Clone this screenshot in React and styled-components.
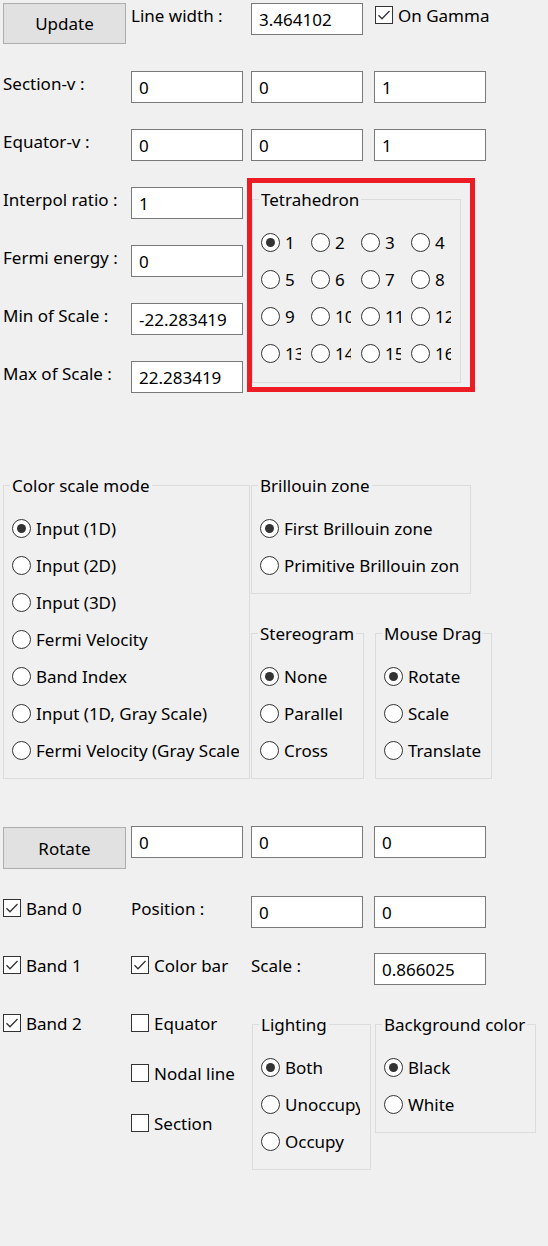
import React from "react";
import styled, { createGlobalStyle } from "styled-components";

const FONT = `"Noto Sans", "Open Sans", "DejaVu Sans", sans-serif`;
const SIZE = "17px";

const GlobalStyle = createGlobalStyle`
  html, body { margin: 0; padding: 0; background: #f0f0f0; }
  body { font-family: ${FONT}; font-size: ${SIZE}; color: #000; }
  *, *::before, *::after { box-sizing: border-box; }
`;

const Page = styled.div`
  position: relative;
  width: 548px;
  min-height: 1246px;
  padding: 3px 0 0 3px;
  display: flex;
  flex-direction: column;
  overflow: hidden;
  background: #f0f0f0;
`;

const FormGrid = styled.div`
  display: grid;
  grid-template-columns: 128px 120px 123px 1fr;
  grid-template-rows: ${(p) => p.$rows};
  align-items: start;
  margin-top: ${(p) => p.$mt || 0}px;
`;

const PushButton = styled.button`
  width: 123px;
  height: ${(p) => p.$h}px;
  margin-top: ${(p) => p.$mt || 0}px;
  background: #e1e1e1;
  border: 1px solid #adadad;
  border-radius: 0;
  font-family: ${FONT};
  font-size: ${SIZE};
  color: #000;
  padding: 0;
`;

const FieldLabel = styled.div`
  padding-top: 2px;
  line-height: 22px;
  white-space: nowrap;
`;

const TextBox = styled.input`
  display: block;
  width: 112px;
  height: 32px;
  border: 1px solid #7a7a7a;
  background: #fff;
  padding: 0 0 0 7px;
  margin: 0;
  font-family: ${FONT};
  font-size: ${SIZE};
  color: #000;
  outline: none;
`;

const CheckItem = styled.label`
  display: flex;
  align-items: center;
  gap: 5px;
  height: 24px;
  width: ${(p) => (p.$w ? `${p.$w}px` : "auto")};
  margin-left: ${(p) => p.$ml || 0}px;
  overflow: hidden;
  white-space: nowrap;
`;

const CheckBoxBox = styled.span`
  flex: 0 0 18px;
  width: 18px;
  height: 18px;
  border: 1px solid #333;
  background: #fff;
  display: flex;
  align-items: center;
  justify-content: center;
`;

const RadioItem = styled.label`
  display: flex;
  align-items: center;
  gap: 5px;
  height: 37px;
  width: ${(p) => (p.$w ? `${p.$w}px` : "auto")};
  overflow: hidden;
  white-space: nowrap;
`;

const RadioCircle = styled.span`
  flex: 0 0 19px;
  width: 19px;
  height: 19px;
  border-radius: 50%;
  border: 1px solid #333;
  background: #fff;
  display: flex;
  align-items: center;
  justify-content: center;
  &::after {
    content: "";
    display: ${(p) => (p.$on ? "block" : "none")};
    width: 9px;
    height: 9px;
    border-radius: 50%;
    background: #333;
  }
`;

const Frame = styled.div`
  position: relative;
  width: ${(p) => p.$w}px;
  margin-top: ${(p) => p.$mt || 0}px;
  margin-left: ${(p) => p.$ml || 0}px;
  border: 1px solid #dcdcdc;
  padding: 0 8px ${(p) => (p.$pb != null ? p.$pb : 9)}px 8px;
`;

const Legend = styled.div`
  width: fit-content;
  margin: -11px 0 0 -2px;
  padding: 0 2px;
  line-height: 22px;
  background: #f0f0f0;
  white-space: nowrap;
`;

const OptionList = styled.div`
  margin-top: 13px;
  display: flex;
  flex-direction: column;
`;

const OptionGrid = styled.div`
  margin-top: 13px;
  display: grid;
  grid-template-columns: repeat(4, 40px);
  grid-auto-rows: 37px;
  column-gap: 10px;
`;

const Highlight = styled.span`
  position: absolute;
  left: -6px;
  right: -15px;
  top: -22px;
  bottom: -10px;
  border: 5px solid #ed1c24;
  pointer-events: none;
`;

const Middle = styled.div`
  display: flex;
  align-items: flex-start;
  margin-top: 66px;
`;

const SideColumn = styled.div`
  display: flex;
  flex-direction: column;
  margin-left: 1px;
`;

const GroupRow = styled.div`
  display: flex;
  align-items: flex-start;
  margin-top: ${(p) => p.$mt || 0}px;
`;

const CheckStack = styled.div`
  display: flex;
  flex-direction: column;
  gap: 26px;
`;

const TetraCell = styled.div`
  grid-column: span 2;
  grid-row: span 4;
`;

const Tick = () => (
  <svg width="16" height="16" viewBox="0 0 16 16">
    <polyline
      points="2.5,8.2 6,11.8 13.5,4"
      fill="none"
      stroke="#333"
      strokeWidth="1.3"
    />
  </svg>
);

const Check = ({ label, on, w, ml }) => (
  <CheckItem $w={w} $ml={ml}>
    <CheckBoxBox>{on && <Tick />}</CheckBoxBox>
    <span>{label}</span>
  </CheckItem>
);

const Radio = ({ label, on, w }) => (
  <RadioItem $w={w}>
    <RadioCircle $on={on} />
    <span>{label}</span>
  </RadioItem>
);

const Group = ({ title, w, mt, ml, pb, children, highlight, grid, itemW }) => {
  const List = grid ? OptionGrid : OptionList;
  return (
    <Frame $w={w} $mt={mt} $ml={ml} $pb={pb}>
      <Legend>{title}</Legend>
      <List>
        {children.map((o) => (
          <Radio key={o.label} label={o.label} on={o.on} w={itemW} />
        ))}
      </List>
      {highlight && <Highlight />}
    </Frame>
  );
};

const tetra = Array.from({ length: 16 }, (_, i) => ({
  label: String(i + 1),
  on: i === 0,
}));

const opts = (list) => list.map((label, i) => ({ label, on: i === 0 }));

const colorModes = opts([
  "Input (1D)",
  "Input (2D)",
  "Input (3D)",
  "Fermi Velocity",
  "Band Index",
  "Input (1D, Gray Scale)",
  "Fermi Velocity (Gray Scale)",
]);

export default function App() {
  return (
    <>
      <GlobalStyle />
      <Page>
        <FormGrid $rows="68px repeat(6, 58px)">
          <PushButton $h={41}>Update</PushButton>
          <FieldLabel>Line width :</FieldLabel>
          <TextBox readOnly defaultValue="3.464102" />
          <Check label="On Gamma" on ml={1} />

          <FieldLabel>Section-v :</FieldLabel>
          <TextBox readOnly defaultValue="0" />
          <TextBox readOnly defaultValue="0" />
          <TextBox readOnly defaultValue="1" />

          <FieldLabel>Equator-v :</FieldLabel>
          <TextBox readOnly defaultValue="0" />
          <TextBox readOnly defaultValue="0" />
          <TextBox readOnly defaultValue="1" />

          <FieldLabel>Interpol ratio :</FieldLabel>
          <TextBox readOnly defaultValue="1" />
          <TetraCell>
            <Group
              title="Tetrahedron"
              w={209}
              mt={12}
              ml={1}
              pb={10}
              grid
              itemW={40}
              highlight
            >
              {tetra}
            </Group>
          </TetraCell>

          <FieldLabel>Fermi energy :</FieldLabel>
          <TextBox readOnly defaultValue="0" />

          <FieldLabel>Min of Scale :</FieldLabel>
          <TextBox readOnly defaultValue="-22.283419" />

          <FieldLabel>Max of Scale :</FieldLabel>
          <TextBox readOnly defaultValue="22.283419" />
        </FormGrid>

        <Middle>
          <Group title="Color scale mode" w={247} itemW={227}>
            {colorModes}
          </Group>
          <SideColumn>
            <Group title="Brillouin zone" w={220} itemW={199}>
              {opts(["First Brillouin zone", "Primitive Brillouin zone"])}
            </Group>
            <GroupRow $mt={39}>
              <Group title="Stereogram" w={113}>
                {opts(["None", "Parallel", "Cross"])}
              </Group>
              <Group title="Mouse Drag" w={117} ml={11}>
                {opts(["Rotate", "Scale", "Translate"])}
              </Group>
            </GroupRow>
          </SideColumn>
        </Middle>

        <FormGrid $rows="70px 57px 58px auto" $mt={47}>
          <PushButton $h={42} $mt={1}>
            Rotate
          </PushButton>
          <TextBox readOnly defaultValue="0" />
          <TextBox readOnly defaultValue="0" />
          <TextBox readOnly defaultValue="0" />

          <Check label="Band 0" on />
          <FieldLabel>Position :</FieldLabel>
          <TextBox readOnly defaultValue="0" />
          <TextBox readOnly defaultValue="0" />

          <Check label="Band 1" on />
          <Check label="Color bar" on />
          <FieldLabel>Scale :</FieldLabel>
          <TextBox readOnly defaultValue="0.866025" />

          <Check label="Band 2" on />
          <CheckStack>
            <Check label="Equator" />
            <Check label="Nodal line" w={104} />
            <Check label="Section" />
          </CheckStack>
          <Group title="Lighting" w={119} mt={13} ml={1} itemW={99}>
            {opts(["Both", "Unoccupy", "Occupy"])}
          </Group>
          <Group title="Background color" w={161} mt={13} ml={1}>
            {opts(["Black", "White"])}
          </Group>
        </FormGrid>
      </Page>
    </>
  );
}
